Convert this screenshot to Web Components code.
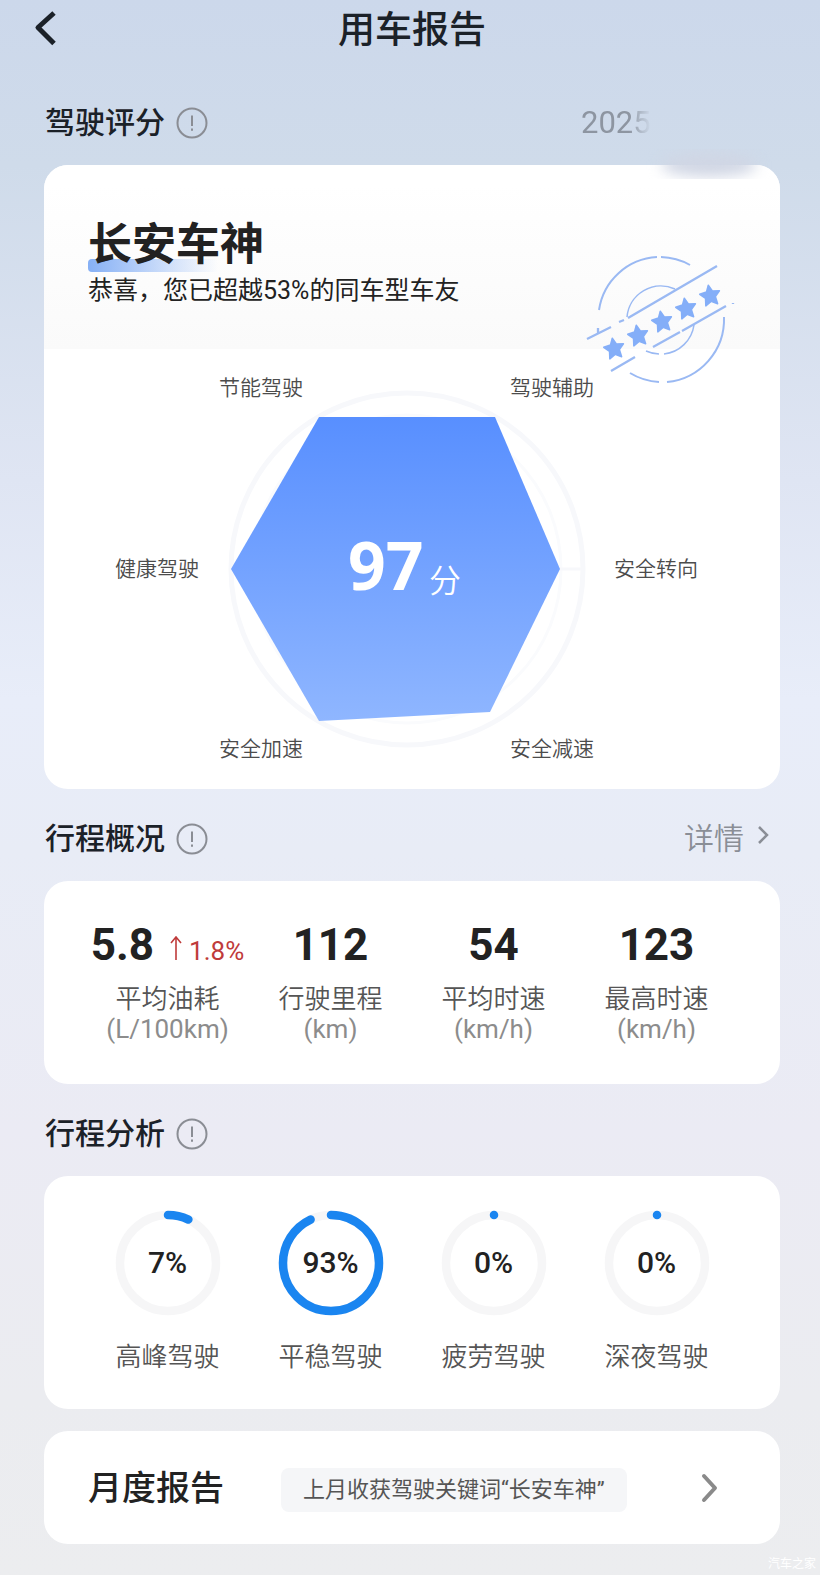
<!DOCTYPE html>
<html lang="zh-CN">
<head>
<meta charset="utf-8">
<meta name="viewport" content="width=device-width, initial-scale=1">
<title>用车报告</title>
<style>
    html { background: #ecedef; }
    body {
        margin: 0;
        font-family: Roboto, "Noto Sans CJK SC", sans-serif;
        color: #222;
        background: linear-gradient(#ccd8eb 0, #cfdbea 165px, #dfe5f3 480px, #e8edf9 700px, #e8ecf6 850px, #ebebf4 1130px, #ebecf0 1400px, #ecedef 100%);
    }
</style>
</head>
<body>
<report-page>
    <report-header slot="header">用车报告</report-header>

    <section-title>驾驶评分<report-date slot="extra">2025</report-date></section-title>
    <report-card>
        <score-summary name="长安车神">恭喜，您已超越53%的同车型车友</score-summary>
        <score-radar score="97" unit="分"
            axes="安全转向:87,安全减速:94,安全加速:100,健康驾驶:100,节能驾驶:100,驾驶辅助:100"></score-radar>
    </report-card>

    <section-title>行程概况<more-link slot="extra">详情</more-link></section-title>
    <report-card>
        <column-row>
            <trip-stat value="5.8" change="1.8%" unit="(L/100km)">平均油耗</trip-stat>
            <trip-stat value="112" unit="(km)">行驶里程</trip-stat>
            <trip-stat value="54" unit="(km/h)">平均时速</trip-stat>
            <trip-stat value="123" unit="(km/h)">最高时速</trip-stat>
        </column-row>
    </report-card>

    <section-title>行程分析</section-title>
    <report-card>
        <column-row>
            <ring-gauge percent="7">高峰驾驶</ring-gauge>
            <ring-gauge percent="93">平稳驾驶</ring-gauge>
            <ring-gauge percent="0">疲劳驾驶</ring-gauge>
            <ring-gauge percent="0">深夜驾驶</ring-gauge>
        </column-row>
    </report-card>

    <monthly-report keyword="上月收获驾驶关键词“长安车神”">月度报告</monthly-report>
    <span slot="mark">汽车之家</span>
</report-page>

<script>
'use strict';
(function (){

function attach(el, html){
    const shadow = el.attachShadow({mode:'open'});
    shadow.innerHTML = html;
    return shadow;
}

class ReportPage extends HTMLElement {
    constructor(){
        super();
        attach(this, `
        <style>
        :host{ display: block; position: relative; }
        main{
            display: flex;
            flex-direction: column;
            padding: 0 40px 31px 44px;
        }
        ::slotted([slot="mark"]){
            position: absolute;
            right: 4px;
            bottom: 2px;
            font-size: 12px;
            line-height: 18px;
            color: #fff;
        }
        </style>
        <slot name="header"></slot>
        <main><slot></slot></main>
        <slot name="mark"></slot>
        `);
    }
}

class ReportHeader extends HTMLElement {
    constructor(){
        super();
        attach(this, `
        <style>
        :host{
            display: grid;
            grid-template-columns: 1fr auto 1fr;
            align-items: center;
            height: 56px;
            padding: 0 28px 17px 32px;
            color: #1b2128;
        }
        h1{ margin: 0; padding-top: 6px; font-size: 37px; line-height: 50px; font-weight: 500; }
        button{
            justify-self: start;
            display: flex;
            padding: 0;
            border: 0;
            background: none;
            color: inherit;
        }
        </style>
        <button aria-label="返回">
            <svg width="28" height="40" viewBox="0 0 28 40" fill="none" stroke="currentColor" stroke-width="5" stroke-linejoin="round">
                <path d="M22 5 6 19.500 22 35.500"/>
            </svg>
        </button>
        <h1><slot></slot></h1>
        `);
    }
}

class SectionTitle extends HTMLElement {
    constructor(){
        super();
        attach(this, `
        <style>
        :host{
            display: flex;
            align-items: center;
            justify-content: space-between;
            height: 84px;
            padding: 8px 0 0 1px;
            color: #1b2128;
        }
        div{ display: flex; align-items: center; gap: 11px; }
        h2{ margin: 0; font-size: 30px; line-height: 44px; font-weight: 500; }
        button{
            display: flex;
            padding: 0;
            border: 0;
            background: none;
            color: #8a8d94;
        }
        </style>
        <div>
            <h2><slot></slot></h2>
            <button aria-label="说明">
                <svg width="32" height="32" viewBox="0 0 32 32" fill="none" stroke="currentColor" stroke-width="2">
                    <circle cx="16" cy="16" r="14.500"/>
                    <path d="M16 8.500v10.500M16 21.500v2.200"/>
                </svg>
            </button>
        </div>
        <slot name="extra"></slot>
        `);
    }
}

// date fades out under a soft patch that also covers the card edge
class ReportDate extends HTMLElement {
    constructor(){
        super();
        attach(this, `
        <style>
        :host{
            display: block;
            position: relative;
            z-index: 1;
            width: 199px;
            font-size: 31px;
            line-height: 44px;
            color: #8d95a1;
        }
        span{
            -webkit-mask-image: linear-gradient(90deg, #000 48px, transparent 70px);
            mask-image: linear-gradient(90deg, #000 48px, transparent 70px);
        }
        i{
            position: absolute;
            left: 60px;
            top: 48px;
            width: 140px;
            height: 30px;
            overflow: hidden;
        }
        i::before{
            content: "";
            display: block;
            width: 96px;
            height: 24px;
            margin: 4px 20px;
            border-radius: 50%;
            background: #d0d6e4;
            filter: blur(7px);
        }
        </style>
        <span><slot></slot></span><i></i>
        `);
    }
}

class MoreLink extends HTMLElement {
    constructor(){
        super();
        attach(this, `
        <style>
        :host{ display: block; }
        a{
            display: flex;
            align-items: center;
            gap: 12px;
            padding-right: 10px;
            font-size: 30px;
            line-height: 44px;
            font-weight: 350;
            color: #8a8e96;
            text-decoration: none;
        }
        svg{ margin-bottom: 8px; }
        </style>
        <a href="#trips"><slot></slot>
            <svg width="14" height="20" viewBox="0 0 14 20" fill="none" stroke="currentColor" stroke-width="2.500">
                <path d="M3 2 11 10 3 18"/>
            </svg>
        </a>
        `);
    }
}

class ReportCard extends HTMLElement {
    constructor(){
        super();
        attach(this, `
        <style>
        :host{ display: block; background: #fff; border-radius: 24px; }
        </style>
        <slot></slot>
        `);
    }
}

class ScoreSummary extends HTMLElement {
    constructor(){
        super();
        attach(this, `
        <style>
        :host{
            display: block;
            position: relative;
            height: 136px;
            padding: 48px 44px 0;
            border-radius: 24px 24px 0 0;
            background: linear-gradient(#fff 20px, #fafafa);
        }
        h3{
            position: relative;
            z-index: 0;
            width: max-content;
            margin: 0;
            font-size: 44px;
            line-height: 64px;
            font-weight: 700;
        }
        h3::before{
            content: "";
            position: absolute;
            z-index: -1;
            left: 0;
            bottom: 5px;
            width: 130px;
            height: 13px;
            border-radius: 4px;
            background: linear-gradient(90deg, #86b0f5, #86b0f500);
        }
        p{ margin: 0; font-size: 25px; line-height: 28px; }
        svg{ position: absolute; right: 40px; top: 86px; }
        </style>
        <h3>${this.getAttribute('name')}</h3>
        <p><slot></slot></p>
        <svg width="156" height="140" viewBox="0 0 156 140" fill="none" stroke="#9ab9f3" stroke-width="2">
            <defs><path id="star" d="M0-10 3-3.500 10-2.500 5 2.500 6 10 0 6.500-6 10-5 2.500-10-2.500-3-3.500Z" fill="#84aef8" stroke="#84aef8" stroke-width="1.500" stroke-linejoin="round" transform="rotate(-10)"/></defs>
            <path d="M15 59A62 62 0 0 1 73 6M77 6A62 62 0 0 1 106 14M140 66A63 63 0 0 1 83 131M75 131A62 62 0 0 1 46 122"/>
            <path d="M43 66A34 34 0 0 1 91 38M110 74A34 34 0 0 1 80 103M75 103A34 34 0 0 1 62 100" stroke-width="1.500"/>
            <path d="M3 88 27 76M35 71 40 69M44 67 133 15M27 120 51 106M69 96 96 81M98 80 142 55M14 77v6M149 52v1" stroke-width="2.300"/>
            <use href="#star" x="30" y="97"/>
            <use href="#star" x="54" y="84"/>
            <use href="#star" x="78" y="70"/>
            <use href="#star" x="102" y="57"/>
            <use href="#star" x="126" y="44"/>
        </svg>
        `);
    }
}

class ScoreRadar extends HTMLElement {
    constructor(){
        super();
        const cx = 363, cy = 220;
        const radius = 176;
        const axes = this.getAttribute('axes').split(',').map(item => item.split(':'));
        // label anchors, clockwise from the right-hand axis
        const spots = [[612, 227], [508, 407], [217, 407], [113, 227], [217, 46], [508, 46]];
        const points = axes.map(([, value], i) => {
            const r = radius * value / 100;
            const a = i * Math.PI / 3;
            return [Math.round(cx + r * Math.cos(a)), Math.round(cy + r * Math.sin(a))];
        });

        attach(this, `
        <style>
        :host{ display: block; }
        svg{ display: block; width: 100%; }
        .axis{ font-size: 21px; font-weight: 350; fill: #4c4c4c; text-anchor: middle; }
        .score{ font: 700 66px "Noto Sans", sans-serif; fill: #fff; }
        .unit{ font-size: 32px; font-weight: 350; fill: #fff; }
        </style>
        <svg viewBox="0 0 736 440">
            <linearGradient id="fill" x1="0" y1="0" x2="0" y2="1">
                <stop offset="0" stop-color="#588fff"/>
                <stop offset="1" stop-color="#8fb6ff"/>
            </linearGradient>
            <g fill="none" stroke="#f7f8fb">
                <circle cx="${cx}" cy="${cy}" r="${radius}" stroke-width="5"/>
                <circle cx="${cx}" cy="${cy}" r="154" stroke-width="3" stroke="#fafbfd"/>
                <path d="M${cx} ${cy}h${radius}" stroke-width="3"/>
            </g>
            <polygon points="${points.join(' ')}" fill="url(#fill)"/>
            <text class="score" x="304" y="241">${this.getAttribute('score')}</text>
            <text class="unit" x="385" y="243">${this.getAttribute('unit')}</text>
            ${axes.map(([name], i) => `
            <text class="axis" x="${spots[i][0]}" y="${spots[i][1]}">${name}</text>
            `).join('')}
        </svg>
        `);
    }
}

class ColumnRow extends HTMLElement {
    constructor(){
        super();
        attach(this, `
        <style>
        :host{
            display: grid;
            grid-template-columns: repeat(auto-fit, minmax(150px, 1fr));
            padding: 34px 42px;
        }
        </style>
        <slot></slot>
        `);
    }
}

class TripStat extends HTMLElement {
    constructor(){
        super();
        const change = this.getAttribute('change');
        attach(this, `
        <style>
        :host{ display: flex; flex-direction: column; align-items: center; white-space: nowrap; }
        .value{ display: flex; align-items: baseline; gap: 16px; font-size: 44px; line-height: 60px; font-weight: 700; }
        .change{ display: flex; align-items: baseline; gap: 7px; font-size: 26px; line-height: 30px; font-weight: 400; color: #bf3b3b; }
        .label{ font-size: 26px; line-height: 30px; margin-top: 9px; color: #555; font-weight: 350; }
        .unit{ font-size: 26px; line-height: 30px; padding-bottom: 6px; color: #8c8c8c; }
        </style>
        <div class="value">${this.getAttribute('value')}${change ? `
            <span class="change">
                <svg width="12" height="24" viewBox="0 0 12 24" fill="none" stroke="currentColor" stroke-width="1.600">
                    <path d="M6 24V1M1 7 6 1 11 7"/>
                </svg>${change}
            </span>` : ''}
        </div>
        <div class="label"><slot></slot></div>
        <div class="unit">${this.getAttribute('unit')}</div>
        `);
    }
}

class RingGauge extends HTMLElement {
    constructor(){
        super();
        const percent = Number(this.getAttribute('percent'));
        // a near-zero dash still paints its round cap
        attach(this, `
        <style>
        :host{ display: flex; flex-direction: column; align-items: center; }
        .ring{ display: grid; place-items: center; }
        .ring > *{ grid-area: 1 / 1; }
        span{ font-size: 30px; line-height: 40px; font-weight: 500; }
        .label{ font-size: 26px; line-height: 36px; margin-top: 23px; color: #555; font-weight: 350; }
        </style>
        <div class="ring">
            <svg width="106" height="106" viewBox="0 0 106 106" fill="none" stroke-width="8.500">
                <circle cx="53" cy="53" r="48" stroke="#f6f6f7"/>
                <circle cx="53" cy="53" r="48" stroke="#1a85f0" stroke-linecap="round"
                    pathLength="100" stroke-dasharray="${percent || 0.01} 200" transform="rotate(-90 53 53)"/>
            </svg>
            <span>${percent}%</span>
        </div>
        <div class="label"><slot></slot></div>
        `);
    }
}

class MonthlyReport extends HTMLElement {
    constructor(){
        super();
        attach(this, `
        <style>
        :host{ display: block; margin-top: 22px; }
        a{
            display: flex;
            align-items: center;
            height: 113px;
            padding: 0 60px 0 44px;
            border-radius: 24px;
            background: #fff;
            color: #222;
            text-decoration: none;
        }
        h2{ margin: 0 57px 0 0; font-size: 34px; line-height: 50px; font-weight: 500; }
        span{
            padding: 6px 22px;
            margin: 4px auto 0 0;
            border-radius: 8px;
            background: #f5f6f8;
            font-size: 22px;
            line-height: 32px;
            color: #555;
        }
        </style>
        <a href="#monthly">
            <h2><slot></slot></h2>
            <span>${this.getAttribute('keyword')}</span>
            <svg width="20" height="32" viewBox="0 0 20 32" fill="none" stroke="#8a8a8a" stroke-width="4" stroke-linecap="round" stroke-linejoin="round">
                <path d="M4 4 15 16 4 28"/>
            </svg>
        </a>
        `);
    }
}

customElements.define('report-page', ReportPage);
customElements.define('report-header', ReportHeader);
customElements.define('section-title', SectionTitle);
customElements.define('report-date', ReportDate);
customElements.define('more-link', MoreLink);
customElements.define('report-card', ReportCard);
customElements.define('score-summary', ScoreSummary);
customElements.define('score-radar', ScoreRadar);
customElements.define('column-row', ColumnRow);
customElements.define('trip-stat', TripStat);
customElements.define('ring-gauge', RingGauge);
customElements.define('monthly-report', MonthlyReport);
})();
</script>
</body>
</html>
